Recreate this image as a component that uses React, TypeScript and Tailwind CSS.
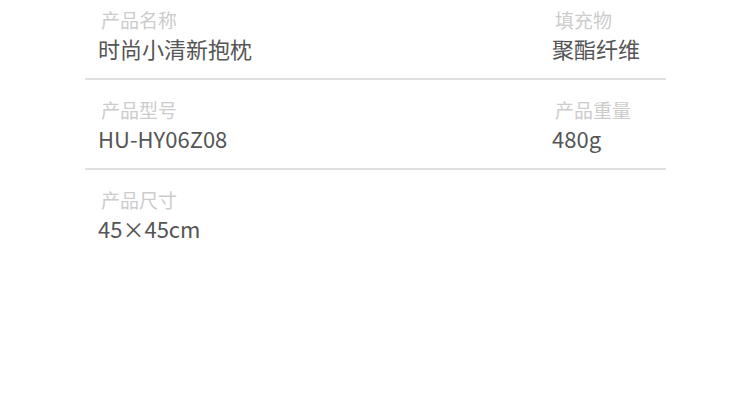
const rows = [
  [
    { label: "产品名称", value: "时尚小清新抱枕" },
    { label: "填充物", value: "聚酯纤维" },
  ],
  [
    { label: "产品型号", value: "HU-HY06Z08" },
    { label: "产品重量", value: "480g" },
  ],
  [{ label: "产品尺寸", value: "45×45cm" }],
];

const Cell = ({ label, value }: { label: string; value: string }) => (
  <div className="pl-[13px]">
    <div className="pl-[3px] text-[19px] leading-[24px] text-[#cccccc]">{label}</div>
    <div className="mt-[2px] text-[22px] leading-[28px] text-[#555555]">{value}</div>
  </div>
);

export default function App() {
  return (
    <div
      className="w-[750px] h-[402px] bg-white overflow-hidden"
      style={{ fontFamily: '"Noto Sans CJK SC", "Noto Sans", sans-serif' }}
    >
      <div className="-mt-[10px] ml-[85px] w-[581px]">
        {rows.map((row, i) => (
          <div
            key={i}
            className={`flex pt-[18px] pb-[16px] ${
              i < rows.length - 1 ? "border-b-2 border-[#e0e0e0]" : ""
            }`}
          >
            <div className="w-[454px]">
              <Cell {...row[0]} />
            </div>
            {row[1] && <Cell {...row[1]} />}
          </div>
        ))}
      </div>
    </div>
  );
}
